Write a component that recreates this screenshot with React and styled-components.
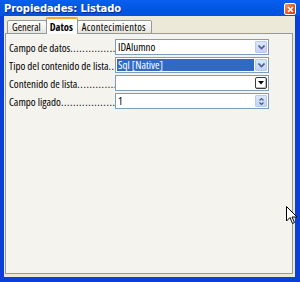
import React from "react";
import styled, { createGlobalStyle } from "styled-components";

const Global = createGlobalStyle`
  html, body { margin: 0; padding: 0; background: #ece9d8; }
  body { width: 300px; height: 282px; overflow: hidden; }
  * { box-sizing: border-box; }
`;

const NARROW = `"Open Sans", "Liberation Sans", sans-serif`;

const Window = styled.div`
  position: relative;
  width: 300px;
  height: 282px;
  background: #0a3fd8;
  display: flex;
  flex-direction: column;
  font-family: ${NARROW};
  font-stretch: 75%;
`;

const TitleBar = styled.div`
  height: 16px;
  flex: none;
  display: flex;
  align-items: center;
  justify-content: space-between;
  padding: 0 4px 0 4px;
  background: linear-gradient(180deg, #0a5ef0 0%, #0258e6 40%, #0050de 100%);
`;

const Title = styled.span`
  color: #fff;
  font-family: "DejaVu Sans", "Liberation Sans", sans-serif;
  font-stretch: normal;
  font-weight: bold;
  font-size: 10px;
  letter-spacing: -0.1px;
  text-shadow: 1px 1px 0 #0a2c8c;
  margin-top: 1px;
`;

const CloseBtn = styled.div`
  width: 12px;
  height: 12px;
  margin-top: 2px;
  border: 1px solid #fff;
  border-radius: 2px;
  background: linear-gradient(135deg, #f49a7c 0%, #e2582c 55%, #c73a12 100%);
  display: flex;
  align-items: center;
  justify-content: center;
`;

const Body = styled.div`
  flex: 1;
  margin: 0 5px 5px 4px;
  background: #ece9d8;
  display: flex;
  flex-direction: column;
  padding: 1px 2px 3px 1px;
`;

const TabRow = styled.div`
  display: flex;
  align-items: flex-end;
  height: 17px;
  padding-left: 2px;
  position: relative;
  z-index: 1;
  margin-bottom: -1px;
`;

const Tab = styled.div`
  height: ${(p) => (p.$active ? "17px" : "14px")};
  padding: ${(p) => (p.$active ? "2px 4px 0 3px" : "0 5px 0 4px")};
  font-size: 10.5px;
  line-height: 13px;
  font-weight: ${(p) => (p.$active ? "bold" : "normal")};
  color: #000;
  background: ${(p) =>
    p.$active ? "#fcfcfe" : "linear-gradient(180deg, #fefefe 0%, #f1f0ea 60%, #e4e3dc 100%)"};
  border: 1px solid #919b9c;
  border-bottom: ${(p) => (p.$active ? "none" : "1px solid #919b9c")};
  border-top: ${(p) => (p.$active ? "2px solid #f2a833" : "1px solid #919b9c")};
  border-radius: 2px 2px 0 0;
  margin-left: ${(p) => (p.$active ? "-1px" : "0")};
  margin-right: ${(p) => (p.$active ? "-1px" : "0")};
  position: relative;
  z-index: ${(p) => (p.$active ? 2 : 1)};
  white-space: nowrap;
  letter-spacing: ${(p) => (p.$wide ? "0.3px" : "0")};
`;

const Panel = styled.div`
  flex: 1;
  border: 1px solid #919b9c;
  background: #f4f3ee;
  padding: 5px 0 0 3px;
  display: flex;
  flex-direction: column;
  gap: 2px;
`;

const Row = styled.div`
  display: flex;
  align-items: center;
  height: 16px;
`;

const Label = styled.div`
  width: 106px;
  font-size: 11px;
  color: #000;
  white-space: nowrap;
  overflow: hidden;
`;

const Leader = styled.span`
  letter-spacing: 0.6px;
`;

const Field = styled.div`
  width: 154px;
  height: 16px;
  border: 1px solid #7f9db9;
  background: #fff;
  display: flex;
  align-items: stretch;
  padding: 1px;
`;

const FieldText = styled.div`
  flex: 1;
  font-size: 11px;
  line-height: 12px;
  padding-left: 1px;
  color: ${(p) => (p.$selected ? "#fff" : "#000")};
  background: ${(p) => (p.$selected ? "#316ac5" : "transparent")};
  white-space: nowrap;
`;

const DropBtn = styled.div`
  width: 12px;
  flex: none;
  margin-left: 1px;
  background: linear-gradient(180deg, #dce6fb 0%, #c3d3f8 100%);
  border: 1px solid #b9caef;
  border-radius: 1px;
  display: flex;
  align-items: center;
  justify-content: center;
`;

const PlainBtn = styled.div`
  width: 12px;
  flex: none;
  margin-left: 1px;
  background: #fff;
  border: 1px solid #3a3a3a;
  border-radius: 2px;
  box-shadow: inset -1px -1px 0 #bdbdbd;
  display: flex;
  align-items: center;
  justify-content: center;
`;

const SpinBtn = styled(DropBtn)`
  flex-direction: column;
  gap: 1px;
`;

const Cursor = styled.svg`
  position: absolute;
  left: 286px;
  top: 206px;
`;

const Chevron = () => (
  <svg width="7" height="5" viewBox="0 0 7 5">
    <path d="M0.5 0.5 L3.5 3.5 L6.5 0.5" stroke="#4d6185" strokeWidth="1.6" fill="none" />
  </svg>
);

const SmallChev = ({ up }) => (
  <svg width="5" height="3" viewBox="0 0 5 3">
    <path d={up ? "M0.5 2.5 L2.5 0.5 L4.5 2.5" : "M0.5 0.5 L2.5 2.5 L4.5 0.5"} stroke="#4d6185" strokeWidth="1.2" fill="none" />
  </svg>
);

const rows = [
  { label: "Campo de datos", value: "IDAlumno", btn: "drop" },
  { label: "Tipo del contenido de lista", value: "Sql [Native]", btn: "drop", selected: true },
  { label: "Contenido de lista", value: "", btn: "plain" },
  { label: "Campo ligado", value: "1", btn: "spin" },
];

const dots = ".".repeat(30);

export default function App() {
  return (
    <>
      <Global />
      <Window>
        <TitleBar>
          <Title>Propiedades: Listado</Title>
          <CloseBtn>
            <svg width="7" height="7" viewBox="0 0 7 7">
              <path d="M1 1 L6 6 M6 1 L1 6" stroke="#fff" strokeWidth="1.6" />
            </svg>
          </CloseBtn>
        </TitleBar>
        <Body>
          <TabRow>
            <Tab>General</Tab>
            <Tab $active>Datos</Tab>
            <Tab $wide>Acontecimientos</Tab>
          </TabRow>
          <Panel>
            {rows.map((r) => (
              <Row key={r.label}>
                <Label>
                  {r.label}
                  <Leader>{dots}</Leader>
                </Label>
                <Field>
                  <FieldText $selected={r.selected}>{r.value}</FieldText>
                  {r.btn === "drop" && (
                    <DropBtn>
                      <Chevron />
                    </DropBtn>
                  )}
                  {r.btn === "plain" && (
                    <PlainBtn>
                      <svg width="6" height="4" viewBox="0 0 6 4">
                        <path d="M0 0 H6 L3 3.5 Z" fill="#000" />
                      </svg>
                    </PlainBtn>
                  )}
                  {r.btn === "spin" && (
                    <SpinBtn>
                      <SmallChev up />
                      <SmallChev />
                    </SpinBtn>
                  )}
                </Field>
              </Row>
            ))}
          </Panel>
        </Body>
        <Cursor width="12" height="19" viewBox="0 0 12 19">
          <path d="M0.5 0.5 L0.5 15 L4 11.5 L6.5 17.5 L8.5 16.5 L6 11 L11 11 Z" fill="#fff" stroke="#000" strokeWidth="1" />
        </Cursor>
      </Window>
    </>
  );
}
